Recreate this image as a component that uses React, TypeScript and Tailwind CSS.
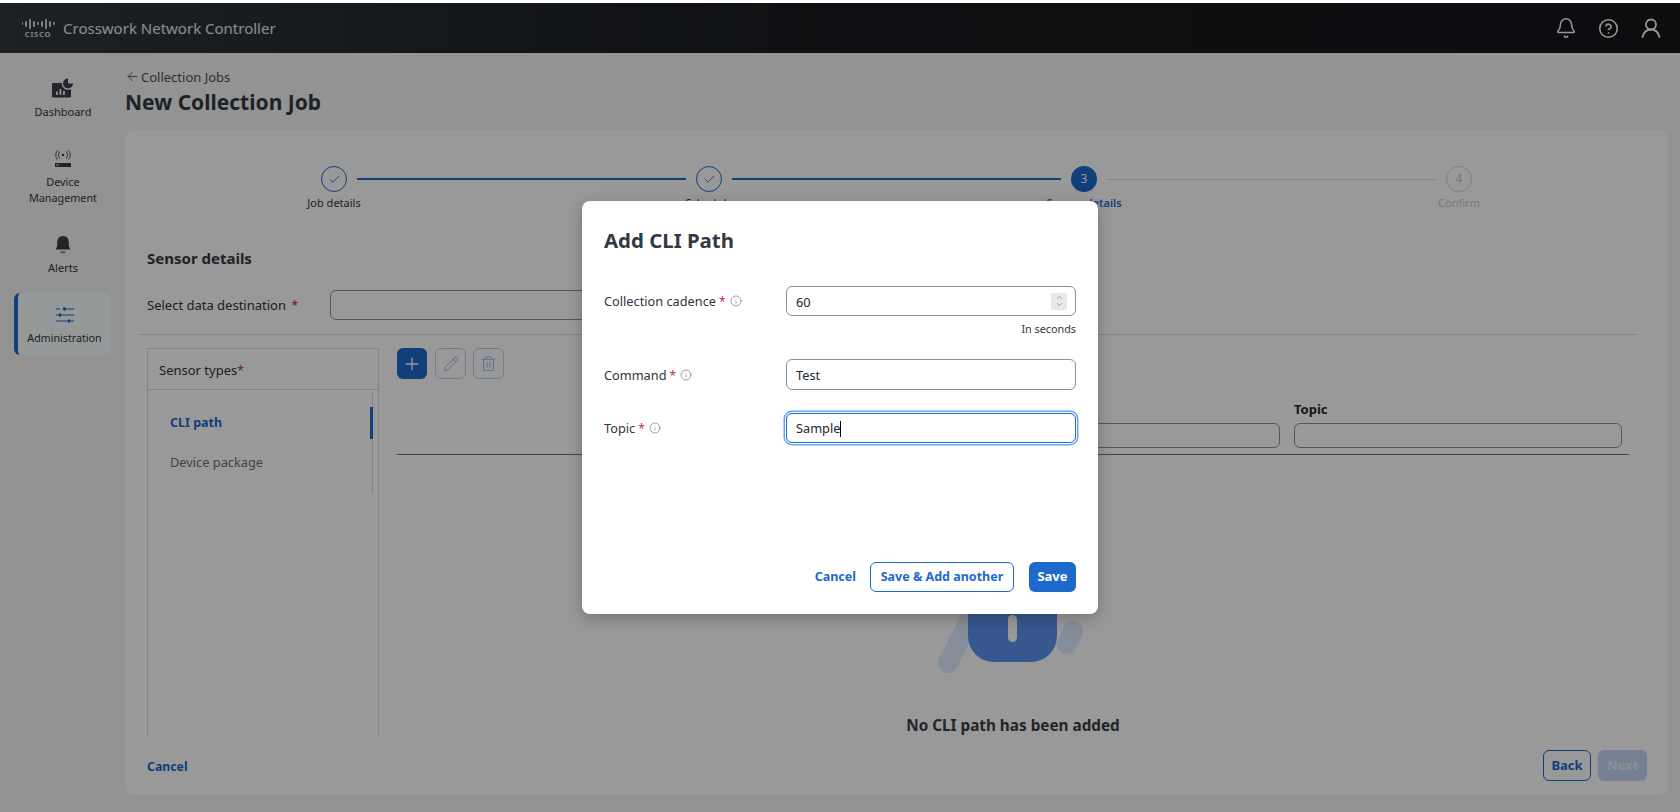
import React from "react";
import { ArrowLeft, Bell, Check, ChevronDown, ChevronUp, CircleHelp, Info, Pencil, Plus, Trash2 } from "lucide-react";

function CiscoLogo() {
  const bars = [3, 6, 10, 6, 3, 6, 10, 6, 3];
  return (
    <div className="flex flex-col items-center w-[34px] opacity-80">
      <div className="flex items-center justify-between w-[33px] h-[11px]">
        {bars.map((h, i) => (
          <span key={i} className="w-[1.5px] bg-white rounded-full" style={{ height: h }} />
        ))}
      </div>
      <span className="text-[7.5px] leading-[8px] mt-[1px] font-bold tracking-[0.8px] text-white">CISCO</span>
    </div>
  );
}

function DashboardIcon() {
  return (
    <svg width="22" height="20" viewBox="0 0 22 20">
      <rect x="0" y="5" width="19" height="14.500" rx="1" fill="#39404a" />
      <rect x="4" y="13.500" width="1.800" height="3.500" fill="#f5f5f5" />
      <rect x="7.500" y="11" width="1.800" height="6" fill="#f5f5f5" />
      <rect x="11" y="13" width="1.800" height="4" fill="#f5f5f5" />
      <circle cx="16" cy="5.500" r="6.300" fill="#f5f5f5" />
      <path d="M16 0.500a5 5 0 1 0 5 5h-5z" fill="#39404a" />
    </svg>
  );
}

function DeviceIcon() {
  return (
    <svg width="18" height="18" viewBox="0 0 18 18" fill="none">
      <circle cx="9" cy="5" r="1.300" fill="#39404a" />
      <path d="M5.700 1.500a5.500 5.500 0 0 0 0 7M3.400 0.500a7.500 7.500 0 0 0 0 9M12.300 1.500a5.500 5.500 0 0 1 0 7M14.600 0.500a7.500 7.500 0 0 1 0 9" stroke="#39404a" strokeWidth="0.900" />
      <rect x="1" y="13" width="16" height="4" fill="#39404a" />
      <rect x="2.500" y="14.400" width="2" height="1.200" fill="#fff" />
    </svg>
  );
}

function AlertIcon() {
  return (
    <svg width="16" height="18" viewBox="0 0 16 18">
      <path d="M8 0C4.300 0 2.200 2.800 2.200 6.200V10L0.600 13.600h14.800L13.800 10V6.200C13.800 2.800 11.700 0 8 0z" fill="#39404a" />
      <path d="M5.400 15.200h5.200a2.600 2.400 0 0 1-5.200 0z" fill="#8b9099" />
    </svg>
  );
}

function AdminIcon() {
  return (
    <svg width="18" height="16" viewBox="0 0 18 16" fill="none" stroke="#1d69cc" strokeWidth="1.100">
      <path d="M0 2h4M7 2h11M0 8h2M5 8h13M0 14h11M15 14h3" />
      <circle cx="8.500" cy="2" r="1.700" fill="#1d69cc" stroke="none" />
      <circle cx="4" cy="8" r="1.700" fill="#1d69cc" stroke="none" />
      <circle cx="13" cy="14" r="1.700" fill="#1d69cc" stroke="none" />
    </svg>
  );
}

function AccountIcon() {
  return (
    <svg width="20" height="20" viewBox="0 0 20 20" fill="none" stroke="white" strokeWidth="1.800" strokeLinecap="round">
      <circle cx="10" cy="6.500" r="5" />
      <path d="M1.500 19c1-4 4-7.500 8.500-7.500s7.500 3.500 8.500 7.500" />
    </svg>
  );
}

function EmptyArt() {
  return (
    <svg width="160" height="100" viewBox="0 0 160 100" className="mb-[39px]">
      <path d="M15 88L42 35" stroke="#dcecff" strokeWidth="20" strokeLinecap="round" />
      <path d="M134 69L140 56" stroke="#dcecff" strokeWidth="20" strokeLinecap="round" />
      <rect x="35" y="10" width="89" height="77" rx="26" fill="#5a93ee" />
      <rect x="75" y="40" width="9" height="27" rx="4.500" fill="#fff" />
    </svg>
  );
}

function Step({ n, state }: { n: number; state: "done" | "current" | "todo" }) {
  if (state === "done")
    return (
      <div className="w-[26px] h-[26px] rounded-full border border-[#1d69cc] flex items-center justify-center shrink-0">
        <Check size={13} strokeWidth={1.6} className="text-[#1d69cc]" />
      </div>
    );
  if (state === "current")
    return (
      <div className="w-[26px] h-[26px] rounded-full bg-[#1d69cc] text-white text-[12px] flex items-center justify-center shrink-0">{n}</div>
    );
  return (
    <div className="w-[26px] h-[26px] rounded-full border border-[#d8d8d8] text-[#c8cacc] text-[12px] flex items-center justify-center shrink-0">{n}</div>
  );
}

function FieldLabel({ children, nudge }: { children: React.ReactNode; nudge: string }) {
  return (
    <div className={`w-[182px] shrink-0 flex items-center text-[12.75px] text-[#30363d] ${nudge}`}>
      {children}
      <span className="text-[#c9303c] ml-[3px] text-[12px]">*</span>
      <Info size={12} strokeWidth={1.100} className="ml-[4px] text-[#555] -mt-[2px]" />
    </div>
  );
}

export default function App() {
  return (
    <div className="relative h-[812px] overflow-hidden bg-white pt-[3px] font-['Noto_Sans',sans-serif] text-[#39404a]">
      <header className="h-[50px] flex items-center bg-gradient-to-r from-[#30373f] to-[#14161a] via-[#171a1e] pl-[21px] pr-[19px]">
        <CiscoLogo />
        <span className="ml-[8px] text-[15px] text-white/90">Crosswork Network Controller</span>
        <div className="ml-auto flex items-center">
          <Bell size={22} strokeWidth={1.700} className="text-white" />
          <CircleHelp size={21} strokeWidth={1.800} className="text-white ml-[21px]" />
          <div className="ml-[22px]">
            <AccountIcon />
          </div>
        </div>
      </header>

      <div className="flex h-[759px] bg-[#f5f5f5]">
        <nav className="w-[125px] shrink-0 flex flex-col items-center text-[11px] leading-[16px] text-[#2f353c] pl-[1px]">
          <div className="flex flex-col items-center mt-[25px]">
            <DashboardIcon />
            <span className="mt-[6px]">Dashboard</span>
          </div>
          <div className="flex flex-col items-center mt-[30px] text-center text-[10.8px]">
            <DeviceIcon />
            <span className="mt-[6px]">Device<br />Management</span>
          </div>
          <div className="flex flex-col items-center mt-[30px]">
            <AlertIcon />
            <span className="mt-[6px]">Alerts</span>
          </div>
          <div className="flex flex-col items-center mt-[17px] -ml-[1px] w-[97px] h-[62px] pt-[14px] rounded-[6px] bg-[#fbffff] border-l-[4px] border-[#1d69cc] text-[10.7px]">
            <AdminIcon />
            <span className="mt-[7px]">Administration</span>
          </div>
        </nav>

        <main className="flex-1 min-w-0 pr-[12px]">
          <div className="flex items-center h-[20px] mt-[15px] text-[13px] text-[#4a5058]">
            <ArrowLeft size={15} strokeWidth={1.400} className="mr-[1px] -mt-[3px]" />
            <span>Collection Jobs</span>
          </div>
          <h1 className="text-[21px] leading-[28px] font-bold text-[#333a42]">New Collection Job</h1>

          <section className="mt-[14px] h-[665px] rounded-[10px] bg-white pt-[36px] overflow-hidden">
            <div className="flex items-center justify-center">
              <Step n={1} state="done" />
              <div className="w-[329px] mx-[10px] h-[2px] bg-[#1d69cc]" />
              <Step n={2} state="done" />
              <div className="w-[329px] mx-[10px] h-[2px] bg-[#1d69cc]" />
              <Step n={3} state="current" />
              <div className="w-[329px] mx-[10px] h-[1px] bg-[#dcdcdc]" />
              <Step n={4} state="todo" />
            </div>
            <div className="grid grid-cols-[repeat(4,375px)] justify-center mt-[3px] text-[11px] leading-[16px] text-center">
              <span className="text-[#2f353c]">Job details</span>
              <span className="text-[#2f353c]">Schedule</span>
              <span className="font-semibold text-[#1d69cc]">Sensor details</span>
              <span className="text-[#c8cacc]">Confirm</span>
            </div>

            <h2 className="pl-[22px] mt-[37px] text-[15px] leading-[20px] font-bold text-[#333a42]">Sensor details</h2>

            <div className="flex items-center pl-[22px] mt-[22px]">
              <div className="w-[183px] shrink-0 text-[13px] pt-[2px] text-[#2f353c]">
                Select data destination <span className="text-[#c9303c] ml-[2px] text-[12px]">*</span>
              </div>
              <div className="w-[600px] h-[30px] rounded-[6px] border border-[#8b9099] bg-white" />
            </div>

            <div className="ml-[13px] w-[1500px] mt-[14px] h-[1px] bg-[#dedede]" />

            <div className="flex pl-[22px] mt-[13px] h-[388px]">
              <aside className="w-[232px] shrink-0 border-x border-t border-[#dcdcdc] flex flex-col">
                <div className="h-[41px] shrink-0 border-b border-[#dcdcdc] flex items-center pl-[11px] pt-[3px] text-[13px] text-[#2f353c]">
                  Sensor types<span className="text-[#c9303c] text-[12px]">*</span>
                </div>
                <div className="relative flex-1 pl-[22px] pt-[23px] text-[12.8px] leading-[20px]">
                  <div className="font-bold text-[12.5px] text-[#1d69cc]">CLI path</div>
                  <div className="mt-[19px] text-[#6a7079]">Device package</div>
                  <div className="absolute right-[5px] top-[2px] w-[1px] h-[101px] bg-[#dcdcdc]" />
                  <div className="absolute right-[5px] top-[17px] w-[3px] h-[32px] bg-[#1d69cc]" />
                </div>
              </aside>

              <div className="ml-[18px] w-[1232px] flex flex-col">
                <div className="flex">
                  <div className="w-[30px] h-[31px] rounded-[6px] bg-[#1d69cc] flex items-center justify-center">
                    <Plus size={20} strokeWidth={1.600} className="text-white" />
                  </div>
                  <div className="ml-[8px] w-[31px] h-[31px] rounded-[6px] border border-[#bcd2f3] flex items-center justify-center">
                    <Pencil size={16} strokeWidth={1.500} className="text-[#9dbcec]" />
                  </div>
                  <div className="ml-[7px] w-[31px] h-[31px] rounded-[6px] border border-[#bcd2f3] flex items-center justify-center">
                    <Trash2 size={17} strokeWidth={1.500} className="text-[#9dbcec]" />
                  </div>
                </div>
                <div className="flex justify-end gap-[14px] pr-[7px] mt-[22px]">
                  <div className="w-[314px]">
                    <div className="h-[16px] text-[13px] leading-[16px] font-bold">Command</div>
                    <div className="mt-[6px] h-[25px] rounded-[6px] border border-[#8b9099]" />
                  </div>
                  <div className="w-[328px]">
                    <div className="h-[16px] text-[13px] leading-[16px] font-bold text-[#23282e]">Topic</div>
                    <div className="mt-[6px] h-[25px] rounded-[6px] border border-[#8b9099]" />
                  </div>
                </div>
                <div className="mt-[6px] h-[1px] bg-[#707070]" />
                <div className="flex-1 min-h-0 flex flex-col items-center justify-end">
                  <EmptyArt />
                  <p className="text-[15.3px] leading-[22px] font-bold text-[#3a3f45]">No CLI path has been added</p>
                </div>
              </div>
            </div>

            <footer className="flex items-center pl-[22px] pr-[21px] mt-[14px]">
              <span className="text-[12.3px] pt-[3px] font-bold text-[#1d69cc]">Cancel</span>
              <div className="ml-auto flex gap-[7px]">
                <div className="w-[48px] h-[31px] rounded-[6px] border border-[#1d69cc] text-[#1d69cc] text-[13px] font-bold flex items-center justify-center">Back</div>
                <div className="w-[49px] h-[31px] rounded-[6px] bg-[#c4d7f6] text-white/60 text-[13px] font-bold flex items-center justify-center">Next</div>
              </div>
            </footer>
          </section>
        </main>
      </div>

      <div className="absolute inset-x-0 top-[3px] bottom-0 bg-black/40 flex items-center justify-center">
        <div className="w-[516px] h-[413px] rounded-[8px] bg-white shadow-[0_4px_16px_rgba(0,0,0,0.25)] px-[22px] pt-[25px] pb-[22px] flex flex-col">
          <h3 className="text-[20.4px] leading-[28px] font-bold text-[#333a42]">Add CLI Path</h3>

          <div className="flex items-center mt-[32px]">
            <FieldLabel nudge="pt-[1px]">Collection cadence</FieldLabel>
            <div className="flex-1 h-[30px] rounded-[6px] border border-[#8b9099] flex items-center pl-[9px] pr-[8px] text-[12.75px] text-[#23282e]">
              <span className="pt-[3px]">60</span>
              <div className="ml-auto w-[16px] h-[17px] bg-[#e9e9ed] flex flex-col items-center justify-center">
                <ChevronUp size={9} strokeWidth={1.300} className="text-[#555] -mb-[1px]" />
                <ChevronDown size={9} strokeWidth={1.300} className="text-[#555] -mt-[1px]" />
              </div>
            </div>
          </div>
          <div className="text-right text-[10.8px] leading-[14px] mt-[6px] text-[#30363d]">In seconds</div>

          <div className="flex items-center mt-[23px]">
            <FieldLabel nudge="pt-[2px]">Command</FieldLabel>
            <div className="flex-1 h-[31px] rounded-[6px] border border-[#8b9099] flex items-center pl-[9px] pt-[2px] text-[12.75px] text-[#23282e]">Test</div>
          </div>

          <div className="flex items-center mt-[23px]">
            <FieldLabel nudge="pt-[1px]">Topic</FieldLabel>
            <div className="flex-1 h-[30px] rounded-[6px] border border-[#1d69cc] shadow-[0_0_0_1px_#ffffff,0_0_0_2.5px_#6ba4f0] flex items-center pl-[9px] pt-[1px] text-[12.75px] text-[#23282e]">
              Sample<span className="w-[1px] h-[16px] bg-black" />
            </div>
          </div>

          <div className="mt-auto flex items-center justify-end text-[12.5px] font-bold">
            <span className="text-[#1d69cc] mr-[1px]">Cancel</span>
            <div className="ml-[13px] w-[144px] h-[30px] rounded-[6px] border border-[#1d69cc] text-[#1d69cc] flex items-center justify-center">Save &amp; Add another</div>
            <div className="ml-[15px] w-[47px] h-[30px] rounded-[6px] bg-[#1d69cc] text-white text-[13px] flex items-center justify-center">Save</div>
          </div>
        </div>
      </div>
    </div>
  );
}
